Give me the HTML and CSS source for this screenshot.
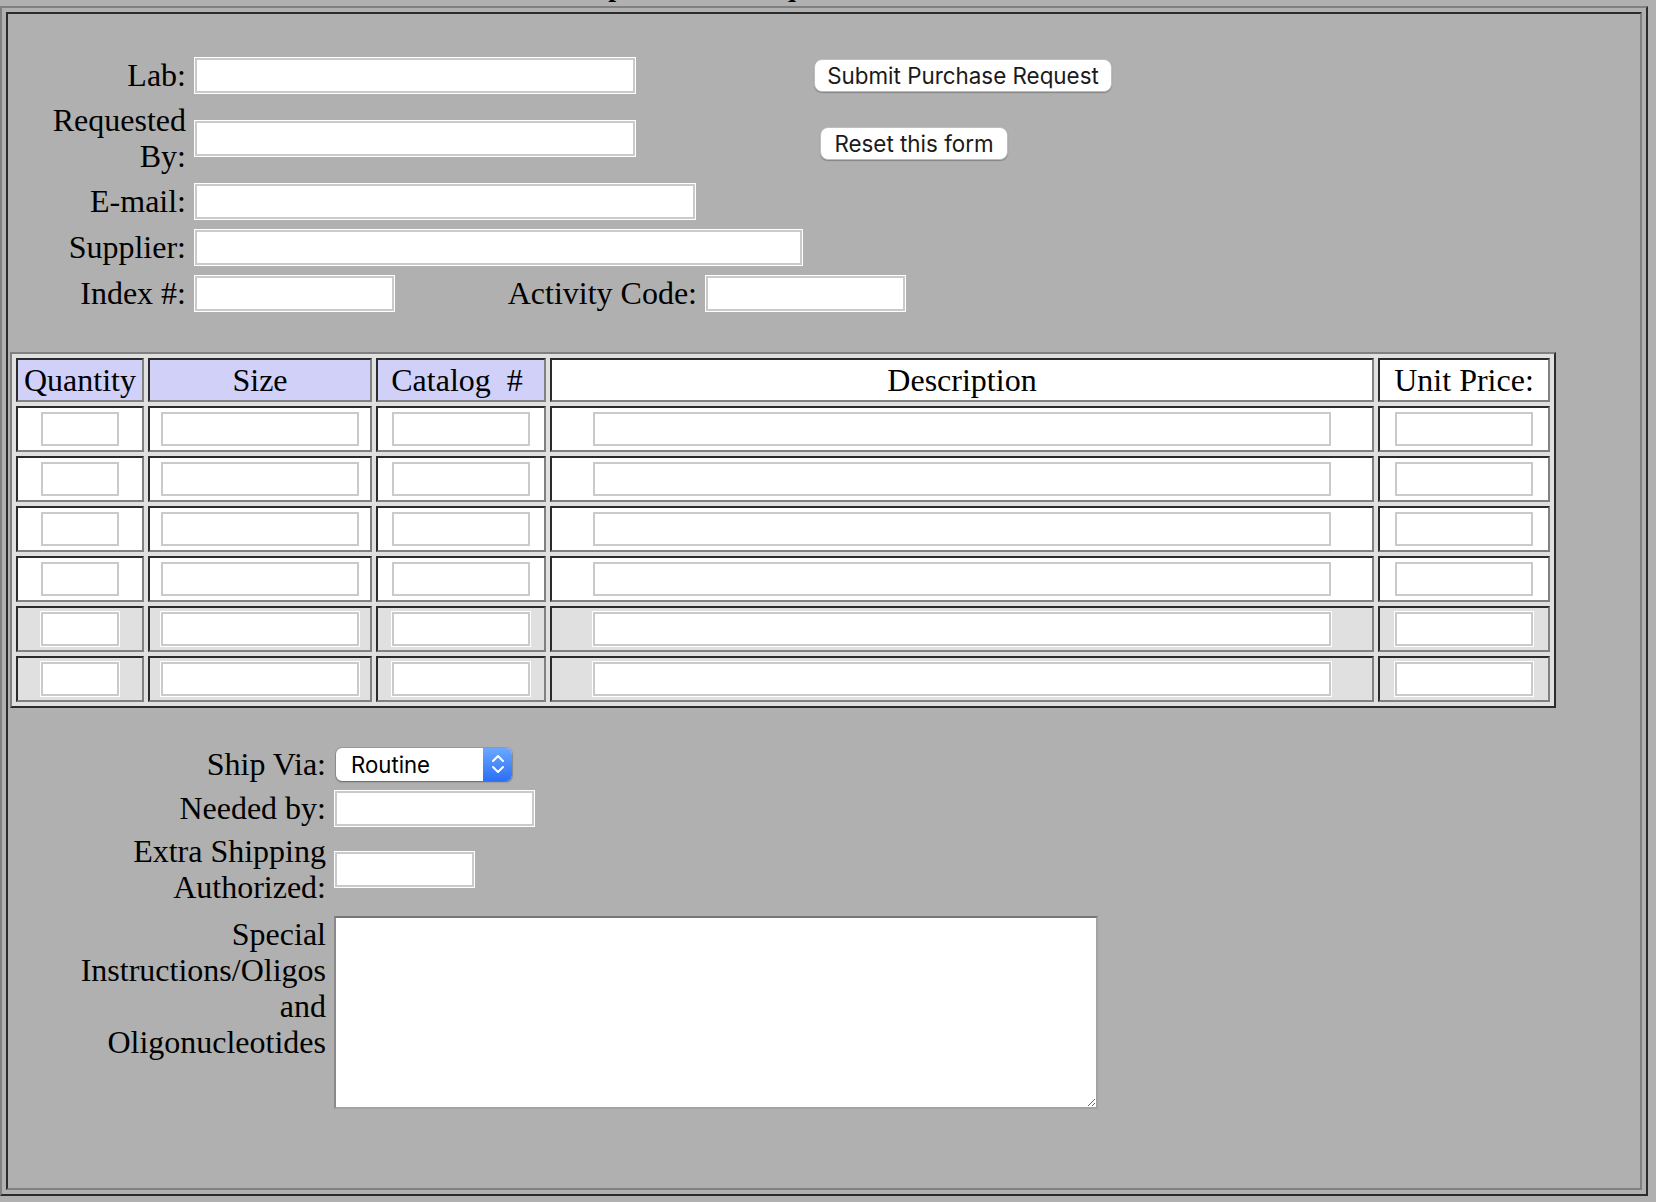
FILE: index.html
```html
<!DOCTYPE html>
<html lang="en">
<head>
<meta charset="utf-8">
<title>Purchase Request</title>
<link rel="stylesheet" href="styles.css">
</head>
<body>
<h1 class="page-title">Shop Purchase Request</h1>
<div class="frame">
  <div class="frame-cell">
    <form class="order-form">
      <div class="head-grid">
        <label class="lbl">Lab:</label>
        <input class="field w-lab span-wide" type="text">
        <button class="btn btn-submit" type="submit">Submit Purchase Request</button>

        <label class="lbl">Requested<br>By:</label>
        <input class="field w-lab span-wide" type="text">
        <button class="btn btn-reset" type="reset">Reset this form</button>

        <label class="lbl">E-mail:</label>
        <input class="field w-email span-wide" type="text">

        <label class="lbl">Supplier:</label>
        <input class="field w-supplier span-wide" type="text">

        <label class="lbl">Index #:</label>
        <input class="field w-index col-index" type="text">
        <label class="lbl lbl-activity">Activity Code:</label>
        <input class="field w-index col-activity" type="text">
      </div>

      <table class="items">
        <tr class="items-head">
          <td class="c-qty hd-blue">Quantity</td>
          <td class="c-size hd-blue">Size</td>
          <td class="c-cat hd-blue">Catalog&nbsp; #&nbsp;</td>
          <td class="c-desc hd-white">Description</td>
          <td class="c-price hd-white">Unit Price:</td>
        </tr>
        <tr class="row-white">
          <td><input class="field in-qty" type="text"></td>
          <td><input class="field in-size" type="text"></td>
          <td><input class="field in-cat" type="text"></td>
          <td><input class="field in-desc" type="text"></td>
          <td><input class="field in-price" type="text"></td>
        </tr>
        <tr class="row-white">
          <td><input class="field in-qty" type="text"></td>
          <td><input class="field in-size" type="text"></td>
          <td><input class="field in-cat" type="text"></td>
          <td><input class="field in-desc" type="text"></td>
          <td><input class="field in-price" type="text"></td>
        </tr>
        <tr class="row-white">
          <td><input class="field in-qty" type="text"></td>
          <td><input class="field in-size" type="text"></td>
          <td><input class="field in-cat" type="text"></td>
          <td><input class="field in-desc" type="text"></td>
          <td><input class="field in-price" type="text"></td>
        </tr>
        <tr class="row-white">
          <td><input class="field in-qty" type="text"></td>
          <td><input class="field in-size" type="text"></td>
          <td><input class="field in-cat" type="text"></td>
          <td><input class="field in-desc" type="text"></td>
          <td><input class="field in-price" type="text"></td>
        </tr>
        <tr class="row-grey">
          <td><input class="field in-qty" type="text"></td>
          <td><input class="field in-size" type="text"></td>
          <td><input class="field in-cat" type="text"></td>
          <td><input class="field in-desc" type="text"></td>
          <td><input class="field in-price" type="text"></td>
        </tr>
        <tr class="row-grey">
          <td><input class="field in-qty" type="text"></td>
          <td><input class="field in-size" type="text"></td>
          <td><input class="field in-cat" type="text"></td>
          <td><input class="field in-desc" type="text"></td>
          <td><input class="field in-price" type="text"></td>
        </tr>
      </table>

      <div class="ship-grid">
        <label class="lbl">Ship Via:</label>
        <div class="select-wrap">
          <select class="select">
            <option>Routine</option>
            <option>Overnight</option>
            <option>2nd Day</option>
          </select>
          <span class="select-arrow">
            <svg width="14" height="20" viewBox="0 0 14 20" fill="none" stroke="#fff" stroke-width="2" stroke-linecap="round" stroke-linejoin="round">
              <polyline points="2,7 7,2 12,7"></polyline>
              <polyline points="2,13 7,18 12,13"></polyline>
            </svg>
          </span>
        </div>

        <label class="lbl">Needed by:</label>
        <input class="field w-needed" type="text">

        <label class="lbl">Extra Shipping<br>Authorized:</label>
        <input class="field w-extra" type="text">

        <label class="lbl lbl-top">Special<br>Instructions/Oligos<br>and<br>Oligonucleotides</label>
        <textarea class="notes"></textarea>
      </div>
    </form>
  </div>
</div>
</body>
</html>
```
FILE: styles.css
```css
html, body {
  margin: 0;
  padding: 0;
  background: #b0b0b0;
}

body {
  font-family: "Liberation Serif", "Times New Roman", serif;
  color: #000;
}

.page-title {
  font-family: "Liberation Serif", "Times New Roman", serif;
  font-size: 28px;
  font-weight: bold;
  line-height: 32px;
  height: 32px;
  margin: -29px 0 3px 0;
  padding-left: 563px;
  white-space: nowrap;
}

/* outer framing table (outset) and its single cell (inset) */
.frame {
  width: 1648px;
  box-sizing: border-box;
  border: 2px solid;
  border-color: #808080 #2b2b2b #2b2b2b #808080;
  padding: 4px;
}

.frame-cell {
  border: 2px solid;
  border-color: #2b2b2b #808080 #808080 #2b2b2b;
}

.order-form {
  margin: 0;
  padding-bottom: 79px;
}

/* labels */
.lbl {
  font-family: "Liberation Serif", "Times New Roman", serif;
  font-size: 32px;
  line-height: 36px;
  text-align: right;
  white-space: nowrap;
  justify-self: end;
}

/* text fields */
.field {
  box-sizing: border-box;
  height: 37px;
  margin: 0;
  padding: 0 6px;
  border: 1px solid #fff;
  box-shadow: inset 0 0 0 2px #cacaca;
  background: #fff;
  font-family: "Liberation Sans", Arial, sans-serif;
  font-size: 22px;
  outline: none;
  border-radius: 0;
}

/* ---------- top block ---------- */
.head-grid {
  display: grid;
  grid-template-columns: 178px 206px 289px 101px 1fr;
  grid-auto-rows: minmax(38px, auto);
  column-gap: 8px;
  row-gap: 8px;
  align-items: center;
  margin-top: 42px;
}

.head-grid .lbl {
  grid-column: 1;
}

.head-grid .lbl-activity {
  grid-column: 3;
}

.span-wide {
  grid-column: 2 / 5;
  justify-self: start;
}

.col-index {
  grid-column: 2;
  justify-self: start;
}

.col-activity {
  grid-column: 4 / 6;
  justify-self: start;
}

.w-lab { width: 442px; }
.w-email { width: 502px; }
.w-supplier { width: 609px; }
.w-index { width: 201px; }

.btn {
  grid-column: 5;
  justify-self: start;
  box-sizing: border-box;
  height: 33px;
  margin: 0;
  padding: 0;
  background: #fff;
  border: 1px solid #bdbdbd;
  border-radius: 8px;
  box-shadow: 0 1px 1px rgba(0, 0, 0, 0.25);
  font-family: Inter, "Liberation Sans", Arial, sans-serif;
  font-size: 22.4px;
  color: #1a1a1a;
  text-align: center;
}

.btn-submit {
  width: 298px;
}

.btn-reset {
  width: 188px;
  margin-left: 6px;
  align-self: start;
  margin-top: 25px;
}

/* ---------- item table ---------- */
.items {
  margin: 40px 0 0 2px;
  border-collapse: separate;
  border-spacing: 4px;
  border: 2px solid;
  border-color: #808080 #2b2b2b #2b2b2b #808080;
  background: #e0e0e0;
}

.items td {
  border: 2px solid;
  border-color: #2b2b2b #808080 #808080 #2b2b2b;
  padding: 0;
  height: 42px;
  text-align: center;
  vertical-align: middle;
  font-size: 32px;
  line-height: 36px;
  white-space: nowrap;
}

.items .items-head td {
  height: 40px;
}

.c-qty { width: 124px; }
.c-size { width: 220px; }
.c-cat { width: 166px; }
.c-desc { width: 820px; }
.c-price { width: 168px; }

.hd-blue { background: #d0d0f8; }
.hd-white { background: #fff; }

.row-white td { background: #fff; }
.row-grey td { background: transparent; }

.items .field {
  display: block;
  margin: 0 auto;
  height: 36px;
}

.in-qty { width: 80px; }
.in-size { width: 200px; }
.in-cat { width: 140px; }
.in-desc { width: 740px; }
.in-price { width: 140px; }

/* ---------- shipping block ---------- */
.ship-grid {
  display: grid;
  grid-template-columns: 246px auto;
  grid-auto-rows: minmax(38px, auto);
  column-gap: 8px;
  row-gap: 6px;
  align-items: center;
  justify-items: start;
  margin: 37px 0 0 72px;
}

.ship-grid .lbl {
  justify-self: end;
}

.ship-grid .lbl-top {
  align-self: start;
  margin-top: 5px;
}

.select-wrap {
  position: relative;
  width: 176px;
  height: 33px;
  margin-left: 2px;
}

.select {
  -webkit-appearance: none;
  appearance: none;
  box-sizing: border-box;
  width: 176px;
  height: 33px;
  margin: 0;
  padding: 0 0 0 15px;
  border: none;
  border-radius: 6px;
  background: #fff;
  box-shadow: 0 0 0 1px rgba(0, 0, 0, 0.12), 0 1px 2px rgba(0, 0, 0, 0.35);
  font-family: Inter, "Liberation Sans", Arial, sans-serif;
  font-size: 22.2px;
  color: #000;
  outline: none;
}

.select-arrow {
  position: absolute;
  top: 0;
  right: 0;
  width: 29px;
  height: 33px;
  border-radius: 0 6px 6px 0;
  background: linear-gradient(#6aa8ff, #2b6ff6);
  display: flex;
  align-items: center;
  justify-content: center;
  pointer-events: none;
}

.w-needed { width: 201px; }
.w-extra { width: 141px; }

.notes {
  box-sizing: border-box;
  width: 764px;
  height: 193px;
  margin: 5px 0 0 0;
  padding: 2px;
  border-style: solid;
  border-width: 2px;
  border-color: #777 #a2a2a2 #a2a2a2 #8a8a8a;
  background: #fff;
  outline: none;
  resize: both;
  font-family: "Liberation Mono", monospace;
  font-size: 22px;
  align-self: start;
}
```
